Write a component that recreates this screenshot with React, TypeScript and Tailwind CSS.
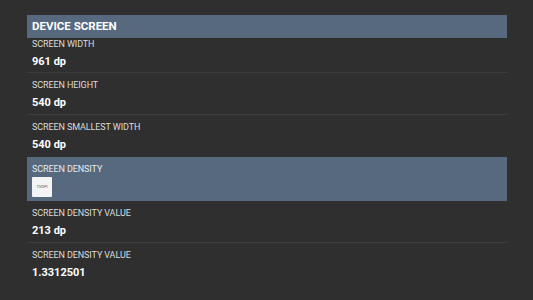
const rows = [
  { label: "SCREEN WIDTH", value: "961 dp" },
  { label: "SCREEN HEIGHT", value: "540 dp" },
  { label: "SCREEN SMALLEST WIDTH", value: "540 dp" },
];

const rowsAfter = [
  { label: "SCREEN DENSITY VALUE", value: "213 dp" },
  { label: "SCREEN DENSITY VALUE", value: "1.3312501" },
];

function InfoRow({ label, value, first, last }: { label: string; value: string; first?: boolean; last?: boolean }) {
  return (
    <div
      className={`flex flex-col px-[5px] ${first ? "h-[35px] pt-[1px]" : "h-[42px] pt-[7px]"} ${
        last ? "" : "border-b border-[#3c3c3c]"
      }`}
    >
      <span className="text-[9px] leading-[11px] text-[#dcdcdc] tracking-[-0.1px]">{label}</span>
      <span className="mt-[4px] text-[11px] leading-[16px] font-bold text-white">{value}</span>
    </div>
  );
}

export default function App() {
  return (
    <div className="w-[533px] h-[300px] bg-[#2f2f2f] pt-[15px] px-[27px] overflow-hidden" style={{ fontFamily: "Roboto, 'Liberation Sans', sans-serif" }}>
      <div className="w-[480px]">
        <div className="h-[23px] bg-[#56697e] flex items-center px-[5px]">
          <span className="text-[11.5px] font-bold text-white">DEVICE SCREEN</span>
        </div>

        {rows.map((r, i) => (
          <InfoRow key={i} label={r.label} value={r.value} first={i === 0} last={i === rows.length - 1} />
        ))}

        {/* Highlighted density row */}
        <div className="h-[44px] bg-[#56697e] flex flex-col px-[5px] pt-[7px]">
          <span className="text-[9px] leading-[11px] text-[#e6e9ed] tracking-[-0.1px]">SCREEN DENSITY</span>
          <div className="mt-[2px] w-[20px] h-[20px] bg-[#f4f4f4] rounded-[1px] flex items-center justify-center">
            <span className="text-[4px] text-[#555] leading-none">TVDPI</span>
          </div>
        </div>

        {rowsAfter.map((r, i) => (
          <InfoRow key={i} label={r.label} value={r.value} last={i === rowsAfter.length - 1} />
        ))}
      </div>
    </div>
  );
}
